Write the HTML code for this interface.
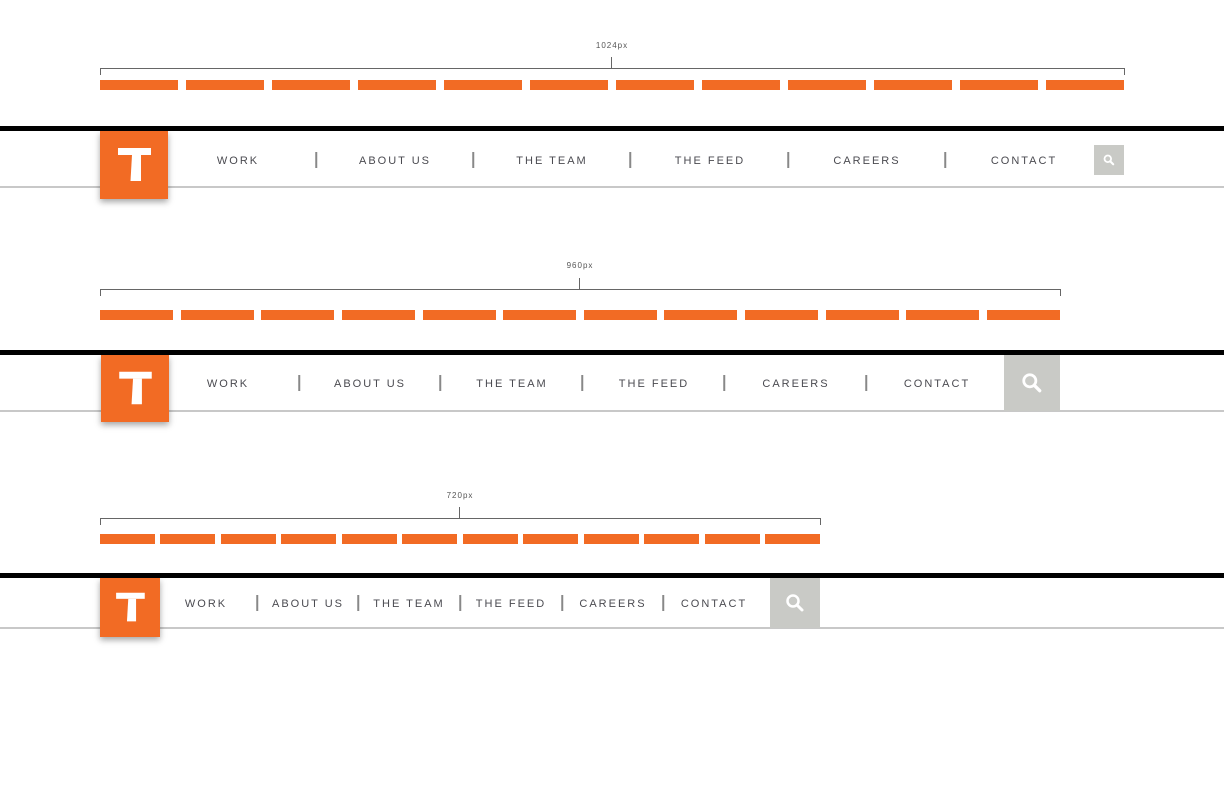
<!DOCTYPE html>
<html><head><meta charset="utf-8"><style>
*{margin:0;padding:0;box-sizing:border-box}
body{width:1224px;height:792px;background:#fff;position:relative;overflow:hidden;font-family:"Liberation Sans",sans-serif}
.a{position:absolute}
.dash{position:absolute;display:flex;justify-content:space-between;height:10px}
.dash i{display:block;background:#f26b24;height:10px}
.lbl{position:absolute;font-size:8px;letter-spacing:1px;color:#555;transform:translateX(-50%)}
.hl{position:absolute;height:1px;background:#666}
.vl{position:absolute;width:1px;background:#666}
.blk{position:absolute;left:0;width:1224px;height:5px;background:#000}
.gl{position:absolute;left:0;width:1224px;height:2px;background:#c8c8c8}
.nav{position:absolute;font-size:11px;letter-spacing:2px;color:#4a4a50;transform:translate(-50%,-50%);white-space:nowrap;margin-top:1px}
.dv{position:absolute;width:1.5px;height:16px;background:#888;transform:translate(-50%,-50%)}
.logo{position:absolute;background:#f26b24;box-shadow:0 3px 6px rgba(0,0,0,.35)}
.srch{position:absolute;background:#c9cac6;display:flex;align-items:center;justify-content:center}
</style></head><body>

<!-- Section 1 -->
<div class="lbl" style="left:612px;top:41px">1024px</div>
<div class="hl" style="left:100px;top:68px;width:1025px"></div>
<div class="vl" style="left:100px;top:68px;height:7px"></div>
<div class="vl" style="left:1124px;top:68px;height:7px"></div>
<div class="vl" style="left:611px;top:57px;height:11px"></div>
<div class="dash" style="left:100px;top:80px;width:1024px"><i style="width:78px"></i><i style="width:78px"></i><i style="width:78px"></i><i style="width:78px"></i><i style="width:78px"></i><i style="width:78px"></i><i style="width:78px"></i><i style="width:78px"></i><i style="width:78px"></i><i style="width:78px"></i><i style="width:78px"></i><i style="width:78px"></i></div>
<div class="blk" style="top:126px"></div>
<div class="gl" style="top:186px"></div>
<div class="nav" style="left:238px;top:160px">WORK</div>
<div class="dv" style="left:316px;top:160px"></div>
<div class="nav" style="left:395px;top:160px">ABOUT US</div>
<div class="dv" style="left:473px;top:160px"></div>
<div class="nav" style="left:552px;top:160px">THE TEAM</div>
<div class="dv" style="left:630px;top:160px"></div>
<div class="nav" style="left:710px;top:160px">THE FEED</div>
<div class="dv" style="left:788px;top:160px"></div>
<div class="nav" style="left:867px;top:160px">CAREERS</div>
<div class="dv" style="left:945px;top:160px"></div>
<div class="nav" style="left:1024px;top:160px">CONTACT</div>
<div class="srch" style="left:1094px;top:145px;width:30px;height:30px"><svg width="12" height="12" viewBox="0 0 20 20"><circle cx="8" cy="8" r="5.5" fill="none" stroke="#fff" stroke-width="3"/><path d="M12 12l5 5" stroke="#fff" stroke-width="3.5" stroke-linecap="round"/></svg></div>
<div class="logo" style="left:100px;top:131px;width:68px;height:68px"><svg width="68" height="68" viewBox="0 0 68 68"><rect x="18" y="17" width="33" height="7" fill="#fff"/><path d="M32 24H41V50H30.5Z" fill="#fff"/></svg></div>

<!-- Section 2 -->
<div class="lbl" style="left:580px;top:261px">960px</div>
<div class="hl" style="left:100px;top:289px;width:961px"></div>
<div class="vl" style="left:100px;top:289px;height:7px"></div>
<div class="vl" style="left:1060px;top:289px;height:7px"></div>
<div class="vl" style="left:579px;top:278px;height:11px"></div>
<div class="dash" style="left:100px;top:310px;width:960px"><i style="width:73px"></i><i style="width:73px"></i><i style="width:73px"></i><i style="width:73px"></i><i style="width:73px"></i><i style="width:73px"></i><i style="width:73px"></i><i style="width:73px"></i><i style="width:73px"></i><i style="width:73px"></i><i style="width:73px"></i><i style="width:73px"></i></div>
<div class="blk" style="top:350px"></div>
<div class="gl" style="top:410px"></div>
<div class="nav" style="left:228px;top:383px">WORK</div>
<div class="dv" style="left:299px;top:383px"></div>
<div class="nav" style="left:370px;top:383px">ABOUT US</div>
<div class="dv" style="left:440px;top:383px"></div>
<div class="nav" style="left:512px;top:383px">THE TEAM</div>
<div class="dv" style="left:582px;top:383px"></div>
<div class="nav" style="left:654px;top:383px">THE FEED</div>
<div class="dv" style="left:724px;top:383px"></div>
<div class="nav" style="left:796px;top:383px">CAREERS</div>
<div class="dv" style="left:866px;top:383px"></div>
<div class="nav" style="left:937px;top:383px">CONTACT</div>
<div class="srch" style="left:1004px;top:355px;width:56px;height:56px"><svg width="22" height="22" viewBox="0 0 20 20"><circle cx="8" cy="8" r="5.5" fill="none" stroke="#fff" stroke-width="2.5"/><path d="M12 12l5 5" stroke="#fff" stroke-width="3" stroke-linecap="round"/></svg></div>
<div class="logo" style="left:101px;top:355px;width:68px;height:67px"><svg width="68" height="67" viewBox="0 0 68 68"><rect x="18" y="17" width="33" height="7" fill="#fff"/><path d="M32 24H41V50H30.5Z" fill="#fff"/></svg></div>

<!-- Section 3 -->
<div class="lbl" style="left:460px;top:491px">720px</div>
<div class="hl" style="left:100px;top:518px;width:721px"></div>
<div class="vl" style="left:100px;top:518px;height:7px"></div>
<div class="vl" style="left:820px;top:518px;height:7px"></div>
<div class="vl" style="left:459px;top:507px;height:11px"></div>
<div class="dash" style="left:100px;top:534px;width:720px"><i style="width:55px"></i><i style="width:55px"></i><i style="width:55px"></i><i style="width:55px"></i><i style="width:55px"></i><i style="width:55px"></i><i style="width:55px"></i><i style="width:55px"></i><i style="width:55px"></i><i style="width:55px"></i><i style="width:55px"></i><i style="width:55px"></i></div>
<div class="blk" style="top:573px"></div>
<div class="gl" style="top:627px"></div>
<div class="nav" style="left:206px;top:603px">WORK</div>
<div class="dv" style="left:257px;top:603px"></div>
<div class="nav" style="left:308px;top:603px">ABOUT US</div>
<div class="dv" style="left:358px;top:603px"></div>
<div class="nav" style="left:409px;top:603px">THE TEAM</div>
<div class="dv" style="left:460px;top:603px"></div>
<div class="nav" style="left:511px;top:603px">THE FEED</div>
<div class="dv" style="left:562px;top:603px"></div>
<div class="nav" style="left:613px;top:603px">CAREERS</div>
<div class="dv" style="left:663px;top:603px"></div>
<div class="nav" style="left:714px;top:603px">CONTACT</div>
<div class="srch" style="left:770px;top:578px;width:50px;height:50px"><svg width="20" height="20" viewBox="0 0 20 20"><circle cx="8" cy="8" r="5.5" fill="none" stroke="#fff" stroke-width="2.5"/><path d="M12 12l5 5" stroke="#fff" stroke-width="3" stroke-linecap="round"/></svg></div>
<div class="logo" style="left:100px;top:578px;width:60px;height:59px"><svg width="60" height="59" viewBox="0 0 68 68"><rect x="18" y="17" width="33" height="7" fill="#fff"/><path d="M32 24H41V50H30.5Z" fill="#fff"/></svg></div>

</body></html>
